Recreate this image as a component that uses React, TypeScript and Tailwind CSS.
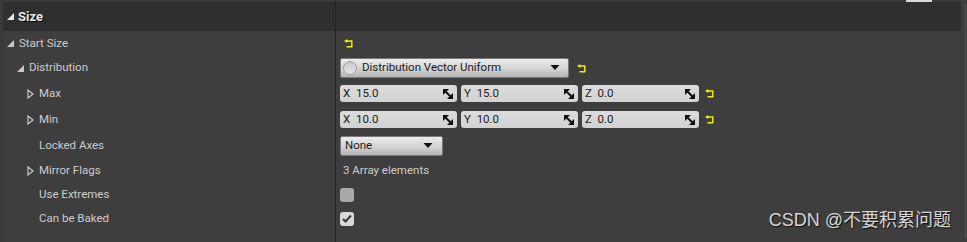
import React from "react";

const font = { fontFamily: '"Roboto", "Noto Sans", "Liberation Sans", sans-serif' };

function Reset() {
  return (
    <svg width="9" height="9" viewBox="0 0 9 9" className="shrink-0">
      <path d="M0 2 L3.2 0 L3.2 4 Z" fill="#f2f200" />
      <path d="M3 2 H7.8 V7.8 H2.5" fill="none" stroke="#f2f200" strokeWidth="1.4" />
    </svg>
  );
}

function TriDown({ white = false }: { white?: boolean }) {
  return (
    <svg width="7" height="7" viewBox="0 0 7 7" className="shrink-0">
      <path d="M7 0 L7 7 L0 7 Z" fill={white ? "#e6e6e6" : "#c8c8c8"} />
    </svg>
  );
}

function TriRight() {
  return (
    <svg width="7" height="10" viewBox="0 0 7 10" className="shrink-0">
      <path d="M1 1 L6 5 L1 9 Z" fill="none" stroke="#cfcfcf" strokeWidth="1.1" />
    </svg>
  );
}

function Spin() {
  return (
    <svg width="10" height="10" viewBox="0 0 10 10" className="shrink-0">
      <path d="M0 0 H6 L0 6 Z" fill="#111" />
      <path d="M10 10 H4 L10 4 Z" fill="#111" />
      <path d="M2 2 L8 8" stroke="#111" strokeWidth="2" />
    </svg>
  );
}

function Caret() {
  return (
    <svg width="10" height="6" viewBox="0 0 10 6" className="shrink-0">
      <path d="M0.5 0 H9.5 L5 5 Z" fill="#111" />
    </svg>
  );
}

function VecField({ axis, value }: { axis: string; value: string }) {
  return (
    <div className="flex h-[17px] w-[117px] items-center justify-between rounded-[3px] bg-gradient-to-b from-[#dcdcdc] to-[#d2d2d2] pl-[3px] pr-[4px] text-[11.5px] text-[#1c1c1c]">
      <span className="whitespace-pre">{axis}  {value}</span>
      <Spin />
    </div>
  );
}

function Row({
  h,
  indent,
  tri,
  label,
  children,
}: {
  h: number;
  indent: number;
  tri?: "down" | "right";
  label: string;
  children?: React.ReactNode;
}) {
  return (
    <div className="flex shrink-0" style={{ height: h }}>
      <div className="flex w-[335px] items-center pt-[1px] text-[11.5px] text-[#cccccc]" style={{ paddingLeft: indent }}>
        <div className="flex w-[12px] items-center">
          {tri === "down" && <TriDown />}
          {tri === "right" && <TriRight />}
        </div>
        <span>{label}</span>
      </div>
      <div className="w-px bg-[#232323]" />
      <div className="flex flex-1 items-center pl-[4px] pt-[1px]">{children}</div>
    </div>
  );
}

export default function App() {
  return (
    <div className="relative h-[242px] w-[967px] overflow-hidden bg-[#3e3e3e]" style={font}>
      <div className="absolute right-[35px] top-0 h-[2px] w-[26px] bg-[#d8d8d8]" />
      <div className="flex h-full">
        <div className="w-[3px] shrink-0 bg-[#3a3a3a]" />
        <div className="flex flex-1 flex-col">
          <div className="h-[2px] shrink-0 bg-[#3a3a3a]" />
          <div className="flex h-[29px] shrink-0 bg-[#2f2f2f]">
            <div className="flex w-[332px] items-center gap-[4px] pl-[4px] text-[13px] font-bold text-[#e8e8e8]">
              <TriDown white />
              <span style={{ textShadow: "1px 1px 0 #000" }}>Size</span>
            </div>
            <div className="w-px bg-[#232323]" />
            <div className="flex-1" />
          </div>
          <div className="-ml-[3px] flex flex-1 flex-col">
            <Row h={24} indent={7} tri="down" label="Start Size">
              <div className="pl-[4px]">
                <Reset />
              </div>
            </Row>
            <Row h={25} indent={17} tri="down" label="Distribution">
              <div className="flex items-center gap-[8px]">
                <div className="flex h-[20px] w-[229px] items-center rounded-[2px] border border-[#7a7a7a] bg-gradient-to-b from-[#ececec] via-[#d6d6d6] to-[#b4b4b4] pl-[2px] pr-[8px] text-[11.5px] text-[#1a1a1a]">
                  <div className="mr-[5px] h-[14px] w-[14px] rounded-full border border-[#a0a0a0] bg-gradient-to-b from-[#c8c8c8] to-[#e6e6e6]" />
                  <span className="flex-1">Distribution Vector Uniform</span>
                  <Caret />
                </div>
                <Reset />
              </div>
            </Row>
            <Row h={26} indent={27} tri="right" label="Max">
              <div className="flex items-center gap-[4px]">
                <VecField axis="X" value="15.0" />
                <VecField axis="Y" value="15.0" />
                <VecField axis="Z" value="0.0" />
                <div className="pl-[2px]">
                  <Reset />
                </div>
              </div>
            </Row>
            <Row h={26} indent={27} tri="right" label="Min">
              <div className="flex items-center gap-[4px]">
                <VecField axis="X" value="10.0" />
                <VecField axis="Y" value="10.0" />
                <VecField axis="Z" value="0.0" />
                <div className="pl-[2px]">
                  <Reset />
                </div>
              </div>
            </Row>
            <Row h={26} indent={27} label="Locked Axes">
              <div className="flex h-[20px] w-[103px] items-center justify-between rounded-[2px] border border-[#7a7a7a] bg-gradient-to-b from-[#ececec] via-[#d6d6d6] to-[#b4b4b4] pl-[4px] pr-[9px] text-[11.5px] text-[#1a1a1a]">
                <span>None</span>
                <Caret />
              </div>
            </Row>
            <Row h={24} indent={27} tri="right" label="Mirror Flags">
              <span className="pl-[3px] text-[11.5px] text-[#cccccc]">3 Array elements</span>
            </Row>
            <Row h={24} indent={27} label="Use Extremes">
              <div className="h-[14px] w-[14px] rounded-[3px] bg-[#a9a9a9]" />
            </Row>
            <Row h={24} indent={27} label="Can be Baked">
              <div className="flex h-[14px] w-[14px] items-center justify-center rounded-[3px] bg-[#d9d9d9]">
                <svg width="10" height="9" viewBox="0 0 10 9">
                  <path d="M1 5 L3.5 7.5 L9 1.5" fill="none" stroke="#3a3a3a" strokeWidth="2" />
                </svg>
              </div>
            </Row>
            <div className="flex flex-1">
              <div className="w-[335px]" />
              <div className="w-px bg-[#232323]" />
            </div>
          </div>
        </div>
        <div className="w-[4px] shrink-0" />
        <div className="my-[4px] w-px shrink-0 bg-[#555555]" />
        <div className="w-[1px] shrink-0 bg-[#3a3a3a]" />
      </div>
      <div
        className="absolute bottom-[11px] right-[16px] text-[18px] leading-[21px] text-[#d6d6d6]"
        style={{
          fontFamily: '"Liberation Sans", "Noto Sans CJK SC", sans-serif',
          textShadow: "1px 1px 1px #111",
        }}
      >
        CSDN @不要积累问题
      </div>
    </div>
  );
}
